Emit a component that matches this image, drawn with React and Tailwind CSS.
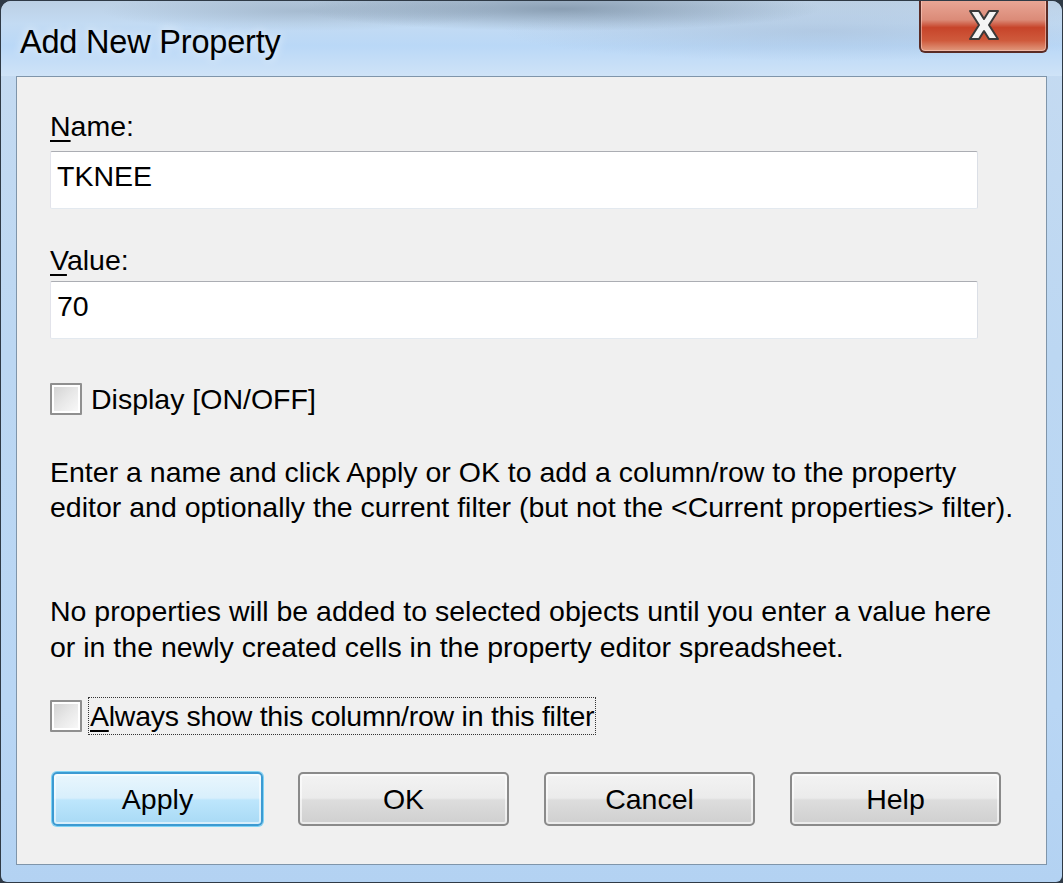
import React from 'react';

const font = { fontFamily: '"Liberation Sans", Arial, sans-serif' };

const CheckBox = () => (
  <div className="w-[32px] h-[32px] shrink-0 border-2 border-[#8f8f8f] bg-white p-[2px] rounded-[1px]">
    <div className="w-full h-full bg-gradient-to-br from-[#d4d4d4] via-[#e8e8e8] to-[#f8f8f8]" />
  </div>
);

const TextBox = ({ value }) => (
  <div className="w-[928px] h-[58px] bg-white border border-[#e3e9ef] border-t-[#abadb3] border-l-[#e2e3ea] border-r-[#dbdfe6] rounded-[2px] flex items-center pl-[6px] pb-[8px] text-[28.5px] leading-none text-black">
    {value}
  </div>
);

const Button = ({ label, primary }) => (
  <button
    className={
      primary
        ? 'w-[211px] h-[54px] rounded-[5px] border-2 border-[#3c9ad2] bg-[linear-gradient(to_bottom,#e9f6fd_0%,#d8effc_48%,#bde6fc_52%,#a8daf5_100%)] shadow-[inset_0_0_0_2px_rgba(255,255,255,0.55),0_0_0_1px_#7fd3f5] text-[28.5px] text-black flex items-center justify-center'
        : 'w-[211px] h-[54px] rounded-[5px] border-2 border-[#8a8a8a] bg-[linear-gradient(to_bottom,#f3f3f3_0%,#ebebeb_48%,#dddddd_52%,#cfcfcf_100%)] shadow-[inset_0_0_0_2px_rgba(255,255,255,0.6)] text-[28.5px] text-black flex items-center justify-center'
    }
  >
    {label}
  </button>
);

export default function App() {
  return (
    <div style={font} className="w-[1063px] h-[883px] bg-[#2f3a46] p-[1px]">
      <div className="w-full h-full rounded-t-[10px] rounded-b-[6px] bg-[linear-gradient(to_bottom,#c6dbf1,#bcd7f2_40%,#b9d6f4_80%,#b3d2f2)] flex flex-col overflow-hidden">
        {/* title bar */}
        <div className="h-[75px] shrink-0 flex items-start justify-between bg-[radial-gradient(ellipse_260px_22px_at_560px_8px,rgba(95,115,135,0.55),transparent),radial-gradient(ellipse_200px_20px_at_300px_10px,rgba(120,140,160,0.35),transparent),radial-gradient(ellipse_320px_30px_at_820px_30px,rgba(150,170,195,0.35),transparent),linear-gradient(to_bottom,#bcd0e4,#c3dbf3_30%,#bad8f7_60%,#cfe3f7)]">
          <div className="pl-[19px] pt-[25px] text-[32.5px] leading-none text-black tracking-[-0.2px] [text-shadow:0_0_10px_rgba(255,255,255,0.9)]">
            Add New Property
          </div>
          <div className="mr-[14px] -mt-[2px] w-[129px] h-[54px] rounded-b-[6px] border-2 border-t-0 border-[#5a2b25] bg-[linear-gradient(to_bottom,#eaa898_0%,#db8b78_40%,#c7442a_55%,#cf5a3c_80%,#e19a7f_100%)] shadow-[inset_0_0_0_1px_rgba(255,220,210,0.5)] flex items-center justify-center">
            <svg width="44" height="36" viewBox="0 0 44 36">
              <path
                d="M8 4 L17 4 L22 12 L27 4 L36 4 L27 18 L36 32 L27 32 L22 24 L17 32 L8 32 L17 18 Z"
                fill="#f4f4f4"
                stroke="#3a3a3a"
                strokeWidth="2"
                strokeLinejoin="round"
              />
            </svg>
          </div>
        </div>

        {/* client area */}
        <div className="flex-1 ml-[15px] mr-[15px] mb-[17px] border border-[#7f95aa] bg-[#f0f0f0] pl-[33px] flex flex-col text-black text-[28.5px] leading-[34px]">
          <div className="mt-[32px]">
            <span className="underline underline-offset-[4px]">N</span>ame:
          </div>
          <div className="mt-[8px]">
            <TextBox value="TKNEE" />
          </div>
          <div className="mt-[34px]">
            <span className="underline underline-offset-[4px]">V</span>alue:
          </div>
          <div className="mt-[4px]">
            <TextBox value="70" />
          </div>

          <div className="mt-[43px] flex items-center gap-[9px]">
            <CheckBox />
            <span>Display [ON/OFF]</span>
          </div>

          <div className="mt-[39px] leading-[35px]">
            Enter a name and click Apply or OK to add a column/row to the property
            <br />
            editor and optionally the current filter (but not the &lt;Current properties&gt; filter).
          </div>

          <div className="mt-[68px] leading-[36px]">
            No properties will be added to selected objects until you enter a value here
            <br />
            or in the newly created cells in the property editor spreadsheet.
          </div>

          <div className="mt-[32px] flex items-center gap-[6px]">
            <CheckBox />
            <span className="border border-dotted border-[#333] px-[1px] h-[38px] flex items-center tracking-[-0.25px]">
              <span className="underline underline-offset-[4px]">A</span>lways show this column/row in this filter
            </span>
          </div>

          <div className="mt-[37px] ml-[2px] flex gap-[35px]">
            <Button label="Apply" primary />
            <Button label="OK" />
            <Button label="Cancel" />
            <Button label="Help" />
          </div>
        </div>
      </div>
    </div>
  );
}
